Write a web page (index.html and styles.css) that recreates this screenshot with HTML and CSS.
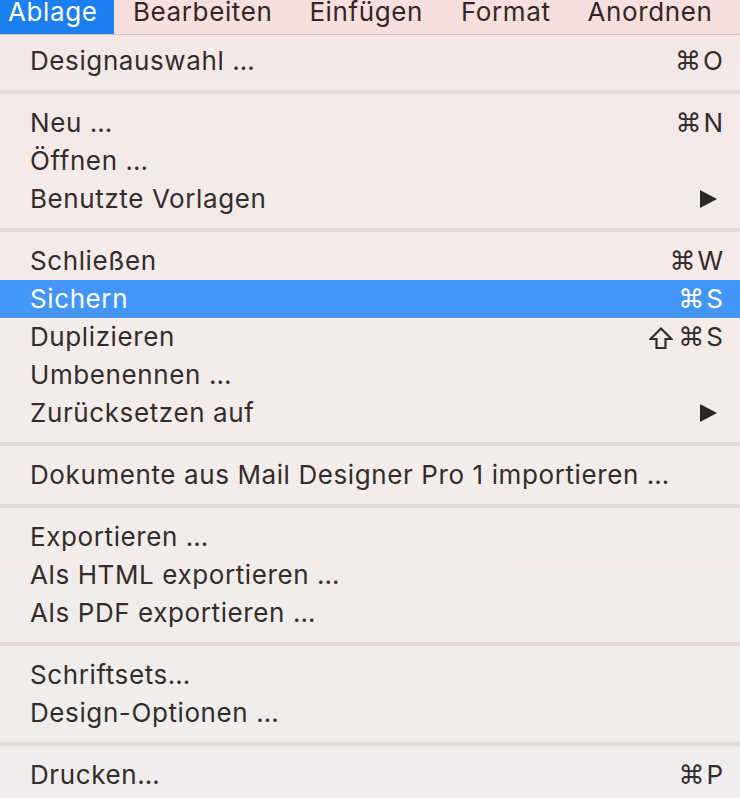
FILE: index.html
```html
<!DOCTYPE html>
<html lang="de">
<head>
<meta charset="utf-8">
<title>Ablage</title>
<link rel="stylesheet" href="styles.css">
</head>
<body>
<div class="screen">
  <nav class="menubar">
    <span class="bar-item active">Ablage</span>
    <span class="bar-item">Bearbeiten</span>
    <span class="bar-item">Einfügen</span>
    <span class="bar-item">Format</span>
    <span class="bar-item">Anordnen</span>
  </nav>
  <div class="menu">
    <div class="row"><span class="label">Designauswahl …</span><span class="key"><span class="cmd">⌘</span>O</span></div>
    <div class="sep"></div>
    <div class="row"><span class="label">Neu …</span><span class="key"><span class="cmd">⌘</span>N</span></div>
    <div class="row"><span class="label">Öffnen …</span></div>
    <div class="row"><span class="label">Benutzte Vorlagen</span><span class="arrow"></span></div>
    <div class="sep"></div>
    <div class="row"><span class="label">Schließen</span><span class="key"><span class="cmd">⌘</span>W</span></div>
    <div class="row selected"><span class="label">Sichern</span><span class="key"><span class="cmd">⌘</span>S</span></div>
    <div class="row"><span class="label">Duplizieren</span><span class="key"><svg class="shift" viewBox="0 0 24 22" width="24" height="22"><path d="M12 1.5 L22.5 12 H16.5 V21 H7.5 V12 H1.5 Z" fill="none" stroke="currentColor" stroke-width="2.2" stroke-linejoin="miter"/></svg><span class="cmd">⌘</span>S</span></div>
    <div class="row"><span class="label">Umbenennen …</span></div>
    <div class="row"><span class="label">Zurücksetzen auf</span><span class="arrow"></span></div>
    <div class="sep"></div>
    <div class="row"><span class="label">Dokumente aus Mail Designer Pro 1 importieren …</span></div>
    <div class="sep"></div>
    <div class="row"><span class="label">Exportieren …</span></div>
    <div class="row"><span class="label">Als HTML exportieren …</span></div>
    <div class="row"><span class="label">Als PDF exportieren …</span></div>
    <div class="sep"></div>
    <div class="row"><span class="label">Schriftsets…</span></div>
    <div class="row"><span class="label">Design-Optionen …</span></div>
    <div class="sep"></div>
    <div class="row"><span class="label">Drucken…</span><span class="key"><span class="cmd">⌘</span>P</span></div>
  </div>
</div>
</body>
</html>
```
FILE: styles.css
```css
* { box-sizing: border-box; }
html, body {
  margin: 0;
  padding: 0;
  width: 740px;
  height: 798px;
  overflow: hidden;
}
body {
  font-family: Inter, "Noto Sans", "Liberation Sans", sans-serif;
  font-size: 26px;
  letter-spacing: 0.6px;
  color: #342c2b;
}
.screen {
  width: 740px;
  height: 798px;
  display: flex;
  flex-direction: column;
  background: linear-gradient(180deg, #f4e8e7 0%, #f4eceb 50%, #efeded 100%);
}
.menubar {
  height: 35px;
  flex: none;
  display: flex;
  align-items: stretch;
  background: #f7dfde;
  border-bottom: 1px solid #c9c1c0;
}
.bar-item {
  display: block;
  padding: 0;
  line-height: 24px;
  color: #332726;
}
.bar-item:nth-child(1) { padding-left: 8px; width: 114px; }
.bar-item:nth-child(2) { margin-left: 19px; }
.bar-item:nth-child(3) { margin-left: 37px; }
.bar-item:nth-child(4) { margin-left: 38px; }
.bar-item:nth-child(5) { margin-left: 37px; }
.bar-item.active {
  background: #1c7ff0;
  color: #ffffff;
}
.menu {
  padding-top: 7px;
  display: flex;
  flex-direction: column;
}
.row {
  height: 38px;
  display: flex;
  align-items: center;
  justify-content: space-between;
  padding: 0 17px 0 30px;
  line-height: 1;
}
.row.selected {
  background: #4396f7;
  color: #ffffff;
}
.key {
  display: flex;
  align-items: center;
  letter-spacing: 0;
}
.cmd {
  font-family: "DejaVu Sans", sans-serif;
  font-size: 26px;
  margin-right: 2px;
}
.shift {
  display: block;
  margin-right: 5px;
  margin-top: 1px;
}
.arrow {
  width: 0;
  height: 0;
  border-top: 9.5px solid transparent;
  border-bottom: 9.5px solid transparent;
  border-left: 17px solid #2f2727;
  margin-right: 6px;
}
.sep {
  height: 24px;
  flex: none;
  display: flex;
  align-items: center;
}
.sep::before {
  content: "";
  display: block;
  width: 100%;
  height: 4px;
  background: #e3dbda;
}
```
